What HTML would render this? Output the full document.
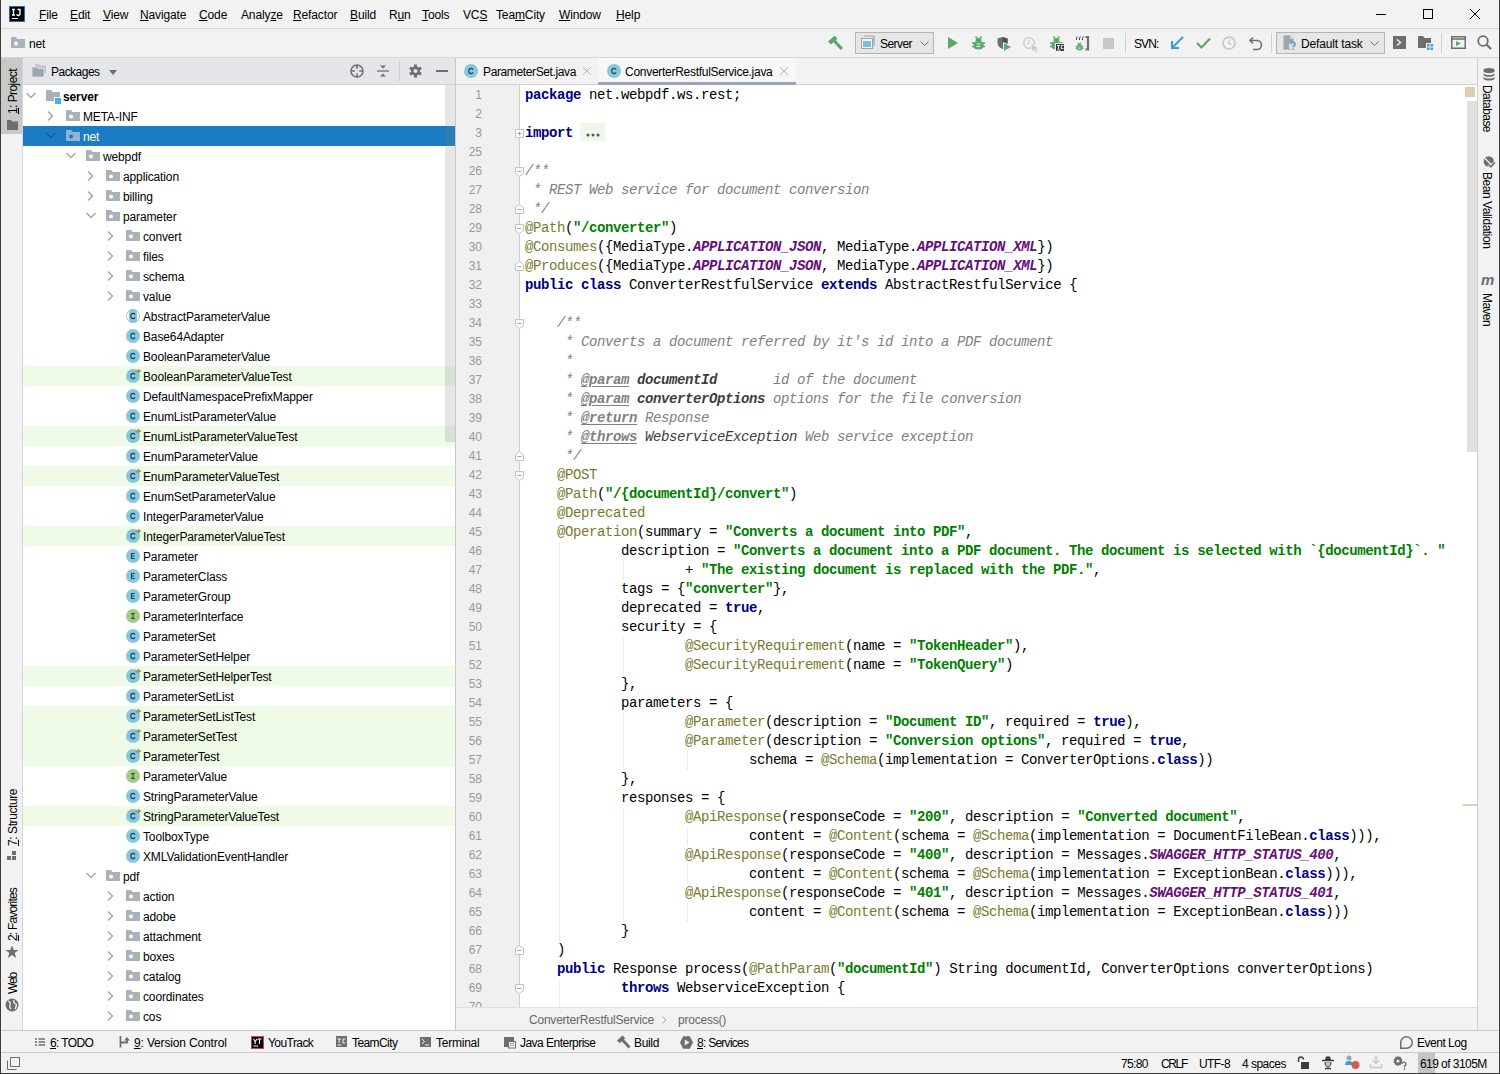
<!DOCTYPE html><html><head><meta charset="utf-8"><style>
*{box-sizing:border-box}
html,body{margin:0;padding:0}
body{width:1500px;height:1074px;overflow:hidden;position:relative;background:#f2f2f2;font-family:"Liberation Sans",sans-serif;font-size:12px;color:#000}
.a{position:absolute}
.ui{position:absolute;font-family:"Liberation Sans",sans-serif;font-size:12px;letter-spacing:-0.13px;white-space:nowrap;line-height:14px}
.hl{position:absolute;height:1px}
.vl{position:absolute;width:1px}
u{text-decoration:underline;text-underline-offset:1px}
svg{position:absolute;overflow:visible}
.row{position:absolute;left:23px;width:432px;height:20px}
.tt{position:absolute;font-family:"Liberation Sans",sans-serif;font-size:12px;letter-spacing:-0.13px;white-space:pre;line-height:20px;color:#000}
.ln{position:absolute;left:456px;width:26px;text-align:right;font-family:"Liberation Sans",sans-serif;font-size:12px;line-height:19px;color:#999}
.cl{position:absolute;left:525px;font-family:"Liberation Mono",monospace;font-size:14px;letter-spacing:-0.4px;line-height:19px;white-space:pre;color:#000}
.k{color:#000080;font-weight:bold}
.s{color:#008000;font-weight:bold}
.an{color:#7a7a2e}
.c{color:#808080;font-style:italic}
.dt{color:#808080;font-style:italic;font-weight:bold;text-decoration:underline;text-underline-offset:2px}
.dp{color:#3d3d3d;font-style:italic;font-weight:bold}
.dr{color:#3d3d3d;font-style:italic}
.st{color:#660e7a;font-weight:bold;font-style:italic}
</style></head><body>
<div class="vl" style="left:0;top:0;height:1074px;background:#3c3c3c"></div>
<div class="vl" style="left:1499px;top:0;height:1074px;background:#3c3c3c"></div>
<div class="hl" style="left:0;top:1073px;width:1500px;background:#3c3c3c"></div>
<div class="hl" style="left:1px;top:28px;width:1498px;background:#d6d6d6"></div>
<div class="a" style="left:9px;top:6px;width:16px;height:16px;background:#000;border:1px solid #2a6aae"></div>
<svg style="left:9px;top:6px" width="16" height="16"><path d="M3 3.5H6M4.5 3.5V9M3 9H6" stroke="#fff" stroke-width="1.3" fill="none"/><path d="M8.5 3.5H11V7.5A1.6 1.6 0 0 1 7.8 8.2" stroke="#fff" stroke-width="1.4" fill="none"/></svg>
<div class="a" style="left:12px;top:18px;width:6px;height:1px;background:#fff"></div>
<div class="ui" style="left:39px;top:8px"><u>F</u>ile</div>
<div class="ui" style="left:70px;top:8px"><u>E</u>dit</div>
<div class="ui" style="left:103px;top:8px"><u>V</u>iew</div>
<div class="ui" style="left:140px;top:8px"><u>N</u>avigate</div>
<div class="ui" style="left:199px;top:8px"><u>C</u>ode</div>
<div class="ui" style="left:241px;top:8px">Analy<u>z</u>e</div>
<div class="ui" style="left:293px;top:8px"><u>R</u>efactor</div>
<div class="ui" style="left:350px;top:8px"><u>B</u>uild</div>
<div class="ui" style="left:389px;top:8px">R<u>u</u>n</div>
<div class="ui" style="left:422px;top:8px"><u>T</u>ools</div>
<div class="ui" style="left:463px;top:8px">VC<u>S</u></div>
<div class="ui" style="left:496px;top:8px">Tea<u>m</u>City</div>
<div class="ui" style="left:559px;top:8px"><u>W</u>indow</div>
<div class="ui" style="left:616px;top:8px"><u>H</u>elp</div>
<div class="a" style="left:1376px;top:14px;width:10px;height:1px;background:#000"></div>
<div class="a" style="left:1423px;top:9px;width:10px;height:10px;border:1px solid #000"></div>
<svg style="left:1470px;top:9px" width="10" height="10"><path d="M0 0L10 10M10 0L0 10" stroke="#000" stroke-width="1"/></svg>
<div class="hl" style="left:1px;top:57px;width:1498px;background:#d6d6d6"></div>
<div class="vl" style="left:22px;top:58px;height:973px;background:#d6d6d6"></div>
<div class="a" style="left:1px;top:58px;width:21px;height:76px;background:#c9c9c9"></div>
<div class="a" style="left:23px;top:58px;width:432px;height:26px;background:#e4e6ea"></div>
<div class="hl" style="left:23px;top:84px;width:432px;background:#d0d0d0"></div>
<div class="a" style="left:23px;top:85px;width:432px;height:945px;background:#fff"></div>
<div class="vl" style="left:455px;top:58px;height:973px;background:#c9c9c9"></div>
<svg style="left:26px;top:92px" width="10" height="7"><path d="M0.5 1L5 5.5L9.5 1" fill="none" stroke="#a8a8a8" stroke-width="1.5"/></svg>
<svg style="left:46px;top:90px" width="16" height="15"><path d="M0 0H5L6.5 2H14V11H0Z" fill="#aab2b9"/><rect x="8.5" y="7.5" width="7" height="7" fill="#40b6e0" stroke="#fff" stroke-width="1"/></svg>
<div class="tt" style="left:63px;top:87px;font-weight:bold">server</div>
<svg style="left:47px;top:111px" width="7" height="10"><path d="M1 0.5L5.5 5L1 9.5" fill="none" stroke="#a8a8a8" stroke-width="1.5"/></svg>
<svg style="left:66px;top:110px" width="14" height="11"><path d="M0 0H5L6.5 2H14V11H0Z" fill="#aab2b9"/><circle cx="5" cy="6.5" r="2" fill="#fff"/></svg>
<div class="tt" style="left:83px;top:107px">META-INF</div>
<div class="a" style="left:23px;top:126px;width:432px;height:20px;background:#1b7cc4"></div>
<svg style="left:46px;top:132px" width="10" height="7"><path d="M0.5 1L5 5.5L9.5 1" fill="none" stroke="#1b5c9a" stroke-width="1.5"/></svg>
<svg style="left:66px;top:130px" width="14" height="11"><path d="M0 0H5L6.5 2H14V11H0Z" fill="#8fb4d6"/><circle cx="5" cy="6.5" r="2" fill="#1b7cc4"/></svg>
<div class="tt" style="left:83px;top:127px;color:#fff">net</div>
<svg style="left:66px;top:152px" width="10" height="7"><path d="M0.5 1L5 5.5L9.5 1" fill="none" stroke="#a8a8a8" stroke-width="1.5"/></svg>
<svg style="left:86px;top:150px" width="14" height="11"><path d="M0 0H5L6.5 2H14V11H0Z" fill="#aab2b9"/><circle cx="5" cy="6.5" r="2" fill="#fff"/></svg>
<div class="tt" style="left:103px;top:147px">webpdf</div>
<svg style="left:87px;top:171px" width="7" height="10"><path d="M1 0.5L5.5 5L1 9.5" fill="none" stroke="#a8a8a8" stroke-width="1.5"/></svg>
<svg style="left:106px;top:170px" width="14" height="11"><path d="M0 0H5L6.5 2H14V11H0Z" fill="#aab2b9"/><circle cx="5" cy="6.5" r="2" fill="#fff"/></svg>
<div class="tt" style="left:123px;top:167px">application</div>
<svg style="left:87px;top:191px" width="7" height="10"><path d="M1 0.5L5.5 5L1 9.5" fill="none" stroke="#a8a8a8" stroke-width="1.5"/></svg>
<svg style="left:106px;top:190px" width="14" height="11"><path d="M0 0H5L6.5 2H14V11H0Z" fill="#aab2b9"/><circle cx="5" cy="6.5" r="2" fill="#fff"/></svg>
<div class="tt" style="left:123px;top:187px">billing</div>
<svg style="left:86px;top:212px" width="10" height="7"><path d="M0.5 1L5 5.5L9.5 1" fill="none" stroke="#a8a8a8" stroke-width="1.5"/></svg>
<svg style="left:106px;top:210px" width="14" height="11"><path d="M0 0H5L6.5 2H14V11H0Z" fill="#aab2b9"/><circle cx="5" cy="6.5" r="2" fill="#fff"/></svg>
<div class="tt" style="left:123px;top:207px">parameter</div>
<svg style="left:107px;top:231px" width="7" height="10"><path d="M1 0.5L5.5 5L1 9.5" fill="none" stroke="#a8a8a8" stroke-width="1.5"/></svg>
<svg style="left:126px;top:230px" width="14" height="11"><path d="M0 0H5L6.5 2H14V11H0Z" fill="#aab2b9"/><circle cx="5" cy="6.5" r="2" fill="#fff"/></svg>
<div class="tt" style="left:143px;top:227px">convert</div>
<svg style="left:107px;top:251px" width="7" height="10"><path d="M1 0.5L5.5 5L1 9.5" fill="none" stroke="#a8a8a8" stroke-width="1.5"/></svg>
<svg style="left:126px;top:250px" width="14" height="11"><path d="M0 0H5L6.5 2H14V11H0Z" fill="#aab2b9"/><circle cx="5" cy="6.5" r="2" fill="#fff"/></svg>
<div class="tt" style="left:143px;top:247px">files</div>
<svg style="left:107px;top:271px" width="7" height="10"><path d="M1 0.5L5.5 5L1 9.5" fill="none" stroke="#a8a8a8" stroke-width="1.5"/></svg>
<svg style="left:126px;top:270px" width="14" height="11"><path d="M0 0H5L6.5 2H14V11H0Z" fill="#aab2b9"/><circle cx="5" cy="6.5" r="2" fill="#fff"/></svg>
<div class="tt" style="left:143px;top:267px">schema</div>
<svg style="left:107px;top:291px" width="7" height="10"><path d="M1 0.5L5.5 5L1 9.5" fill="none" stroke="#a8a8a8" stroke-width="1.5"/></svg>
<svg style="left:126px;top:290px" width="14" height="11"><path d="M0 0H5L6.5 2H14V11H0Z" fill="#aab2b9"/><circle cx="5" cy="6.5" r="2" fill="#fff"/></svg>
<div class="tt" style="left:143px;top:287px">value</div>
<svg style="left:126px;top:309px" width="14" height="14"><circle cx="7" cy="7" r="7" fill="#c6c6c6"/><circle cx="7" cy="7" r="6" fill="#fff"/><path d="M3 1.6A6.3 6.3 0 0 1 11 1.6V12.4A6.3 6.3 0 0 1 3 12.4Z" fill="#84c8e0"/><path d="M9.1 5.6A2.4 2.6 0 1 0 9.1 8.4" fill="none" stroke="#23424e" stroke-width="1.15"/></svg>
<div class="tt" style="left:143px;top:307px">AbstractParameterValue</div>
<svg style="left:126px;top:329px" width="14" height="14"><circle cx="7" cy="7" r="7" fill="#84c8e0"/><path d="M9.1 5.6A2.4 2.6 0 1 0 9.1 8.4" fill="none" stroke="#23424e" stroke-width="1.15"/></svg>
<div class="tt" style="left:143px;top:327px">Base64Adapter</div>
<svg style="left:126px;top:349px" width="14" height="14"><circle cx="7" cy="7" r="7" fill="#84c8e0"/><path d="M9.1 5.6A2.4 2.6 0 1 0 9.1 8.4" fill="none" stroke="#23424e" stroke-width="1.15"/></svg>
<div class="tt" style="left:143px;top:347px">BooleanParameterValue</div>
<div class="a" style="left:23px;top:366px;width:432px;height:20px;background:#effae7"></div>
<svg style="left:126px;top:369px" width="14" height="14"><circle cx="7" cy="7" r="7" fill="#84c8e0"/><path d="M9.1 5.6A2.4 2.6 0 1 0 9.1 8.4" fill="none" stroke="#23424e" stroke-width="1.15"/><path d="M8.8 2.2L11.6 0.2V4.2Z" fill="#e0785a"/><path d="M12 -0.2L15.2 2.2L12 4.6Z" fill="#5aaa5a"/></svg>
<div class="tt" style="left:143px;top:367px">BooleanParameterValueTest</div>
<svg style="left:126px;top:389px" width="14" height="14"><circle cx="7" cy="7" r="7" fill="#84c8e0"/><path d="M9.1 5.6A2.4 2.6 0 1 0 9.1 8.4" fill="none" stroke="#23424e" stroke-width="1.15"/></svg>
<div class="tt" style="left:143px;top:387px">DefaultNamespacePrefixMapper</div>
<svg style="left:126px;top:409px" width="14" height="14"><circle cx="7" cy="7" r="7" fill="#84c8e0"/><path d="M9.1 5.6A2.4 2.6 0 1 0 9.1 8.4" fill="none" stroke="#23424e" stroke-width="1.15"/></svg>
<div class="tt" style="left:143px;top:407px">EnumListParameterValue</div>
<div class="a" style="left:23px;top:426px;width:432px;height:20px;background:#effae7"></div>
<svg style="left:126px;top:429px" width="14" height="14"><circle cx="7" cy="7" r="7" fill="#84c8e0"/><path d="M9.1 5.6A2.4 2.6 0 1 0 9.1 8.4" fill="none" stroke="#23424e" stroke-width="1.15"/><path d="M8.8 2.2L11.6 0.2V4.2Z" fill="#e0785a"/><path d="M12 -0.2L15.2 2.2L12 4.6Z" fill="#5aaa5a"/></svg>
<div class="tt" style="left:143px;top:427px">EnumListParameterValueTest</div>
<svg style="left:126px;top:449px" width="14" height="14"><circle cx="7" cy="7" r="7" fill="#84c8e0"/><path d="M9.1 5.6A2.4 2.6 0 1 0 9.1 8.4" fill="none" stroke="#23424e" stroke-width="1.15"/></svg>
<div class="tt" style="left:143px;top:447px">EnumParameterValue</div>
<div class="a" style="left:23px;top:466px;width:432px;height:20px;background:#effae7"></div>
<svg style="left:126px;top:469px" width="14" height="14"><circle cx="7" cy="7" r="7" fill="#84c8e0"/><path d="M9.1 5.6A2.4 2.6 0 1 0 9.1 8.4" fill="none" stroke="#23424e" stroke-width="1.15"/><path d="M8.8 2.2L11.6 0.2V4.2Z" fill="#e0785a"/><path d="M12 -0.2L15.2 2.2L12 4.6Z" fill="#5aaa5a"/></svg>
<div class="tt" style="left:143px;top:467px">EnumParameterValueTest</div>
<svg style="left:126px;top:489px" width="14" height="14"><circle cx="7" cy="7" r="7" fill="#84c8e0"/><path d="M9.1 5.6A2.4 2.6 0 1 0 9.1 8.4" fill="none" stroke="#23424e" stroke-width="1.15"/></svg>
<div class="tt" style="left:143px;top:487px">EnumSetParameterValue</div>
<svg style="left:126px;top:509px" width="14" height="14"><circle cx="7" cy="7" r="7" fill="#84c8e0"/><path d="M9.1 5.6A2.4 2.6 0 1 0 9.1 8.4" fill="none" stroke="#23424e" stroke-width="1.15"/></svg>
<div class="tt" style="left:143px;top:507px">IntegerParameterValue</div>
<div class="a" style="left:23px;top:526px;width:432px;height:20px;background:#effae7"></div>
<svg style="left:126px;top:529px" width="14" height="14"><circle cx="7" cy="7" r="7" fill="#84c8e0"/><path d="M9.1 5.6A2.4 2.6 0 1 0 9.1 8.4" fill="none" stroke="#23424e" stroke-width="1.15"/><path d="M8.8 2.2L11.6 0.2V4.2Z" fill="#e0785a"/><path d="M12 -0.2L15.2 2.2L12 4.6Z" fill="#5aaa5a"/></svg>
<div class="tt" style="left:143px;top:527px">IntegerParameterValueTest</div>
<svg style="left:126px;top:549px" width="14" height="14"><circle cx="7" cy="7" r="7" fill="#84c8e0"/><path d="M8.8 4.5H5.5V9.5H8.8M5.5 7H8.3" fill="none" stroke="#23424e" stroke-width="1.1"/></svg>
<div class="tt" style="left:143px;top:547px">Parameter</div>
<svg style="left:126px;top:569px" width="14" height="14"><circle cx="7" cy="7" r="7" fill="#84c8e0"/><path d="M8.8 4.5H5.5V9.5H8.8M5.5 7H8.3" fill="none" stroke="#23424e" stroke-width="1.1"/></svg>
<div class="tt" style="left:143px;top:567px">ParameterClass</div>
<svg style="left:126px;top:589px" width="14" height="14"><circle cx="7" cy="7" r="7" fill="#84c8e0"/><path d="M8.8 4.5H5.5V9.5H8.8M5.5 7H8.3" fill="none" stroke="#23424e" stroke-width="1.1"/></svg>
<div class="tt" style="left:143px;top:587px">ParameterGroup</div>
<svg style="left:126px;top:609px" width="14" height="14"><circle cx="7" cy="7" r="7" fill="#9dc98a"/><path d="M5.2 4.5H8.8M7 4.5V9.5M5.2 9.5H8.8" fill="none" stroke="#2a4424" stroke-width="1.1"/></svg>
<div class="tt" style="left:143px;top:607px">ParameterInterface</div>
<svg style="left:126px;top:629px" width="14" height="14"><circle cx="7" cy="7" r="7" fill="#84c8e0"/><path d="M9.1 5.6A2.4 2.6 0 1 0 9.1 8.4" fill="none" stroke="#23424e" stroke-width="1.15"/></svg>
<div class="tt" style="left:143px;top:627px">ParameterSet</div>
<svg style="left:126px;top:649px" width="14" height="14"><circle cx="7" cy="7" r="7" fill="#84c8e0"/><path d="M9.1 5.6A2.4 2.6 0 1 0 9.1 8.4" fill="none" stroke="#23424e" stroke-width="1.15"/></svg>
<div class="tt" style="left:143px;top:647px">ParameterSetHelper</div>
<div class="a" style="left:23px;top:666px;width:432px;height:20px;background:#effae7"></div>
<svg style="left:126px;top:669px" width="14" height="14"><circle cx="7" cy="7" r="7" fill="#84c8e0"/><path d="M9.1 5.6A2.4 2.6 0 1 0 9.1 8.4" fill="none" stroke="#23424e" stroke-width="1.15"/><path d="M8.8 2.2L11.6 0.2V4.2Z" fill="#e0785a"/><path d="M12 -0.2L15.2 2.2L12 4.6Z" fill="#5aaa5a"/></svg>
<div class="tt" style="left:143px;top:667px">ParameterSetHelperTest</div>
<svg style="left:126px;top:689px" width="14" height="14"><circle cx="7" cy="7" r="7" fill="#84c8e0"/><path d="M9.1 5.6A2.4 2.6 0 1 0 9.1 8.4" fill="none" stroke="#23424e" stroke-width="1.15"/></svg>
<div class="tt" style="left:143px;top:687px">ParameterSetList</div>
<div class="a" style="left:23px;top:706px;width:432px;height:20px;background:#effae7"></div>
<svg style="left:126px;top:709px" width="14" height="14"><circle cx="7" cy="7" r="7" fill="#84c8e0"/><path d="M9.1 5.6A2.4 2.6 0 1 0 9.1 8.4" fill="none" stroke="#23424e" stroke-width="1.15"/><path d="M8.8 2.2L11.6 0.2V4.2Z" fill="#e0785a"/><path d="M12 -0.2L15.2 2.2L12 4.6Z" fill="#5aaa5a"/></svg>
<div class="tt" style="left:143px;top:707px">ParameterSetListTest</div>
<div class="a" style="left:23px;top:726px;width:432px;height:20px;background:#effae7"></div>
<svg style="left:126px;top:729px" width="14" height="14"><circle cx="7" cy="7" r="7" fill="#84c8e0"/><path d="M9.1 5.6A2.4 2.6 0 1 0 9.1 8.4" fill="none" stroke="#23424e" stroke-width="1.15"/><path d="M8.8 2.2L11.6 0.2V4.2Z" fill="#e0785a"/><path d="M12 -0.2L15.2 2.2L12 4.6Z" fill="#5aaa5a"/></svg>
<div class="tt" style="left:143px;top:727px">ParameterSetTest</div>
<div class="a" style="left:23px;top:746px;width:432px;height:20px;background:#effae7"></div>
<svg style="left:126px;top:749px" width="14" height="14"><circle cx="7" cy="7" r="7" fill="#84c8e0"/><path d="M9.1 5.6A2.4 2.6 0 1 0 9.1 8.4" fill="none" stroke="#23424e" stroke-width="1.15"/><path d="M8.8 2.2L11.6 0.2V4.2Z" fill="#e0785a"/><path d="M12 -0.2L15.2 2.2L12 4.6Z" fill="#5aaa5a"/></svg>
<div class="tt" style="left:143px;top:747px">ParameterTest</div>
<svg style="left:126px;top:769px" width="14" height="14"><circle cx="7" cy="7" r="7" fill="#9dc98a"/><path d="M5.2 4.5H8.8M7 4.5V9.5M5.2 9.5H8.8" fill="none" stroke="#2a4424" stroke-width="1.1"/></svg>
<div class="tt" style="left:143px;top:767px">ParameterValue</div>
<svg style="left:126px;top:789px" width="14" height="14"><circle cx="7" cy="7" r="7" fill="#84c8e0"/><path d="M9.1 5.6A2.4 2.6 0 1 0 9.1 8.4" fill="none" stroke="#23424e" stroke-width="1.15"/></svg>
<div class="tt" style="left:143px;top:787px">StringParameterValue</div>
<div class="a" style="left:23px;top:806px;width:432px;height:20px;background:#effae7"></div>
<svg style="left:126px;top:809px" width="14" height="14"><circle cx="7" cy="7" r="7" fill="#84c8e0"/><path d="M9.1 5.6A2.4 2.6 0 1 0 9.1 8.4" fill="none" stroke="#23424e" stroke-width="1.15"/><path d="M8.8 2.2L11.6 0.2V4.2Z" fill="#e0785a"/><path d="M12 -0.2L15.2 2.2L12 4.6Z" fill="#5aaa5a"/></svg>
<div class="tt" style="left:143px;top:807px">StringParameterValueTest</div>
<svg style="left:126px;top:829px" width="14" height="14"><circle cx="7" cy="7" r="7" fill="#84c8e0"/><path d="M9.1 5.6A2.4 2.6 0 1 0 9.1 8.4" fill="none" stroke="#23424e" stroke-width="1.15"/></svg>
<div class="tt" style="left:143px;top:827px">ToolboxType</div>
<svg style="left:126px;top:849px" width="14" height="14"><circle cx="7" cy="7" r="7" fill="#84c8e0"/><path d="M9.1 5.6A2.4 2.6 0 1 0 9.1 8.4" fill="none" stroke="#23424e" stroke-width="1.15"/></svg>
<div class="tt" style="left:143px;top:847px">XMLValidationEventHandler</div>
<svg style="left:86px;top:872px" width="10" height="7"><path d="M0.5 1L5 5.5L9.5 1" fill="none" stroke="#a8a8a8" stroke-width="1.5"/></svg>
<svg style="left:106px;top:870px" width="14" height="11"><path d="M0 0H5L6.5 2H14V11H0Z" fill="#aab2b9"/><circle cx="5" cy="6.5" r="2" fill="#fff"/></svg>
<div class="tt" style="left:123px;top:867px">pdf</div>
<svg style="left:107px;top:891px" width="7" height="10"><path d="M1 0.5L5.5 5L1 9.5" fill="none" stroke="#a8a8a8" stroke-width="1.5"/></svg>
<svg style="left:126px;top:890px" width="14" height="11"><path d="M0 0H5L6.5 2H14V11H0Z" fill="#aab2b9"/><circle cx="5" cy="6.5" r="2" fill="#fff"/></svg>
<div class="tt" style="left:143px;top:887px">action</div>
<svg style="left:107px;top:911px" width="7" height="10"><path d="M1 0.5L5.5 5L1 9.5" fill="none" stroke="#a8a8a8" stroke-width="1.5"/></svg>
<svg style="left:126px;top:910px" width="14" height="11"><path d="M0 0H5L6.5 2H14V11H0Z" fill="#aab2b9"/><circle cx="5" cy="6.5" r="2" fill="#fff"/></svg>
<div class="tt" style="left:143px;top:907px">adobe</div>
<svg style="left:107px;top:931px" width="7" height="10"><path d="M1 0.5L5.5 5L1 9.5" fill="none" stroke="#a8a8a8" stroke-width="1.5"/></svg>
<svg style="left:126px;top:930px" width="14" height="11"><path d="M0 0H5L6.5 2H14V11H0Z" fill="#aab2b9"/><circle cx="5" cy="6.5" r="2" fill="#fff"/></svg>
<div class="tt" style="left:143px;top:927px">attachment</div>
<svg style="left:107px;top:951px" width="7" height="10"><path d="M1 0.5L5.5 5L1 9.5" fill="none" stroke="#a8a8a8" stroke-width="1.5"/></svg>
<svg style="left:126px;top:950px" width="14" height="11"><path d="M0 0H5L6.5 2H14V11H0Z" fill="#aab2b9"/><circle cx="5" cy="6.5" r="2" fill="#fff"/></svg>
<div class="tt" style="left:143px;top:947px">boxes</div>
<svg style="left:107px;top:971px" width="7" height="10"><path d="M1 0.5L5.5 5L1 9.5" fill="none" stroke="#a8a8a8" stroke-width="1.5"/></svg>
<svg style="left:126px;top:970px" width="14" height="11"><path d="M0 0H5L6.5 2H14V11H0Z" fill="#aab2b9"/><circle cx="5" cy="6.5" r="2" fill="#fff"/></svg>
<div class="tt" style="left:143px;top:967px">catalog</div>
<svg style="left:107px;top:991px" width="7" height="10"><path d="M1 0.5L5.5 5L1 9.5" fill="none" stroke="#a8a8a8" stroke-width="1.5"/></svg>
<svg style="left:126px;top:990px" width="14" height="11"><path d="M0 0H5L6.5 2H14V11H0Z" fill="#aab2b9"/><circle cx="5" cy="6.5" r="2" fill="#fff"/></svg>
<div class="tt" style="left:143px;top:987px">coordinates</div>
<svg style="left:107px;top:1011px" width="7" height="10"><path d="M1 0.5L5.5 5L1 9.5" fill="none" stroke="#a8a8a8" stroke-width="1.5"/></svg>
<svg style="left:126px;top:1010px" width="14" height="11"><path d="M0 0H5L6.5 2H14V11H0Z" fill="#aab2b9"/><circle cx="5" cy="6.5" r="2" fill="#fff"/></svg>
<div class="tt" style="left:143px;top:1007px">cos</div>
<div class="a" style="left:445px;top:85px;width:10px;height:357px;background:rgba(128,128,128,0.2)"></div>
<div class="hl" style="left:456px;top:84px;width:1021px;background:#d0d0d0"></div>
<div class="a" style="left:456px;top:85px;width:64px;height:922px;background:#f0f0f0"></div>
<div class="vl" style="left:519px;top:85px;height:922px;background:#d0d0d0"></div>
<div class="a" style="left:520px;top:85px;width:957px;height:922px;background:#fff"></div>
<div class="vl" style="left:559px;top:542px;height:399px;background:#ececec"></div>
<div class="vl" style="left:559px;top:979px;height:28px;background:#ececec"></div>
<div class="vl" style="left:623px;top:561px;height:19px;background:#ececec"></div>
<div class="vl" style="left:623px;top:637px;height:38px;background:#ececec"></div>
<div class="vl" style="left:623px;top:713px;height:57px;background:#ececec"></div>
<div class="vl" style="left:623px;top:808px;height:114px;background:#ececec"></div>
<div class="vl" style="left:687px;top:751px;height:19px;background:#ececec"></div>
<div class="vl" style="left:687px;top:827px;height:19px;background:#ececec"></div>
<div class="vl" style="left:687px;top:865px;height:19px;background:#ececec"></div>
<div class="vl" style="left:687px;top:903px;height:19px;background:#ececec"></div>
<div class="a" style="left:456px;top:86px;width:1021px;height:921px;overflow:hidden">
<div class="ln" style="left:0;top:0px">1</div>
<div class="cl" style="left:69px;top:0px"><span class="k">package</span> net.webpdf.ws.rest;</div>
<div class="ln" style="left:0;top:19px">2</div>
<div class="cl" style="left:69px;top:19px"></div>
<div class="ln" style="left:0;top:38px">3</div>
<div class="cl" style="left:69px;top:38px"><span class="k">import</span> <span style="display:inline-block;width:25px;height:18px;vertical-align:top;background:#eef7ea;position:relative;left:-1px;top:-1px"><svg style="left:6px;top:10px" width="14" height="4"><circle cx="2" cy="2" r="1.5" fill="#555"/><circle cx="7" cy="2" r="1.5" fill="#555"/><circle cx="12" cy="2" r="1.5" fill="#555"/></svg></span></div>
<div class="ln" style="left:0;top:57px">25</div>
<div class="cl" style="left:69px;top:57px"></div>
<div class="ln" style="left:0;top:76px">26</div>
<div class="cl" style="left:69px;top:76px"><span class="c">/**</span></div>
<div class="ln" style="left:0;top:95px">27</div>
<div class="cl" style="left:69px;top:95px"><span class="c"> * REST Web service for document conversion</span></div>
<div class="ln" style="left:0;top:114px">28</div>
<div class="cl" style="left:69px;top:114px"><span class="c"> */</span></div>
<div class="ln" style="left:0;top:133px">29</div>
<div class="cl" style="left:69px;top:133px"><span class="an">@Path</span>(<span class="s">&quot;/converter&quot;</span>)</div>
<div class="ln" style="left:0;top:152px">30</div>
<div class="cl" style="left:69px;top:152px"><span class="an">@Consumes</span>({MediaType.<span class="st">APPLICATION_JSON</span>, MediaType.<span class="st">APPLICATION_XML</span>})</div>
<div class="ln" style="left:0;top:171px">31</div>
<div class="cl" style="left:69px;top:171px"><span class="an">@Produces</span>({MediaType.<span class="st">APPLICATION_JSON</span>, MediaType.<span class="st">APPLICATION_XML</span>})</div>
<div class="ln" style="left:0;top:190px">32</div>
<div class="cl" style="left:69px;top:190px"><span class="k">public</span> <span class="k">class</span> ConverterRestfulService <span class="k">extends</span> AbstractRestfulService {</div>
<div class="ln" style="left:0;top:209px">33</div>
<div class="cl" style="left:69px;top:209px"></div>
<div class="ln" style="left:0;top:228px">34</div>
<div class="cl" style="left:69px;top:228px">    <span class="c">/**</span></div>
<div class="ln" style="left:0;top:247px">35</div>
<div class="cl" style="left:69px;top:247px">    <span class="c"> * Converts a document referred by it&#x27;s id into a PDF document</span></div>
<div class="ln" style="left:0;top:266px">36</div>
<div class="cl" style="left:69px;top:266px">    <span class="c"> *</span></div>
<div class="ln" style="left:0;top:285px">37</div>
<div class="cl" style="left:69px;top:285px">    <span class="c"> * </span><span class="dt">@param</span><span class="c"> </span><span class="dp">documentId</span><span class="c">       id of the document</span></div>
<div class="ln" style="left:0;top:304px">38</div>
<div class="cl" style="left:69px;top:304px">    <span class="c"> * </span><span class="dt">@param</span><span class="c"> </span><span class="dp">converterOptions</span><span class="c"> options for the file conversion</span></div>
<div class="ln" style="left:0;top:323px">39</div>
<div class="cl" style="left:69px;top:323px">    <span class="c"> * </span><span class="dt">@return</span><span class="c"> Response</span></div>
<div class="ln" style="left:0;top:342px">40</div>
<div class="cl" style="left:69px;top:342px">    <span class="c"> * </span><span class="dt">@throws</span><span class="c"> </span><span class="dr">WebserviceException</span><span class="c"> Web service exception</span></div>
<div class="ln" style="left:0;top:361px">41</div>
<div class="cl" style="left:69px;top:361px">    <span class="c"> */</span></div>
<div class="ln" style="left:0;top:380px">42</div>
<div class="cl" style="left:69px;top:380px">    <span class="an">@POST</span></div>
<div class="ln" style="left:0;top:399px">43</div>
<div class="cl" style="left:69px;top:399px">    <span class="an">@Path</span>(<span class="s">&quot;/{documentId}/convert&quot;</span>)</div>
<div class="ln" style="left:0;top:418px">44</div>
<div class="cl" style="left:69px;top:418px">    <span class="an">@Deprecated</span></div>
<div class="ln" style="left:0;top:437px">45</div>
<div class="cl" style="left:69px;top:437px">    <span class="an">@Operation</span>(summary = <span class="s">&quot;Converts a document into PDF&quot;</span>,</div>
<div class="ln" style="left:0;top:456px">46</div>
<div class="cl" style="left:69px;top:456px">            description = <span class="s">&quot;Converts a document into a PDF document. The document is selected with `{documentId}`. &quot;</span></div>
<div class="ln" style="left:0;top:475px">47</div>
<div class="cl" style="left:69px;top:475px">                    + <span class="s">&quot;The existing document is replaced with the PDF.&quot;</span>,</div>
<div class="ln" style="left:0;top:494px">48</div>
<div class="cl" style="left:69px;top:494px">            tags = {<span class="s">&quot;converter&quot;</span>},</div>
<div class="ln" style="left:0;top:513px">49</div>
<div class="cl" style="left:69px;top:513px">            deprecated = <span class="k">true</span>,</div>
<div class="ln" style="left:0;top:532px">50</div>
<div class="cl" style="left:69px;top:532px">            security = {</div>
<div class="ln" style="left:0;top:551px">51</div>
<div class="cl" style="left:69px;top:551px">                    <span class="an">@SecurityRequirement</span>(name = <span class="s">&quot;TokenHeader&quot;</span>),</div>
<div class="ln" style="left:0;top:570px">52</div>
<div class="cl" style="left:69px;top:570px">                    <span class="an">@SecurityRequirement</span>(name = <span class="s">&quot;TokenQuery&quot;</span>)</div>
<div class="ln" style="left:0;top:589px">53</div>
<div class="cl" style="left:69px;top:589px">            },</div>
<div class="ln" style="left:0;top:608px">54</div>
<div class="cl" style="left:69px;top:608px">            parameters = {</div>
<div class="ln" style="left:0;top:627px">55</div>
<div class="cl" style="left:69px;top:627px">                    <span class="an">@Parameter</span>(description = <span class="s">&quot;Document ID&quot;</span>, required = <span class="k">true</span>),</div>
<div class="ln" style="left:0;top:646px">56</div>
<div class="cl" style="left:69px;top:646px">                    <span class="an">@Parameter</span>(description = <span class="s">&quot;Conversion options&quot;</span>, required = <span class="k">true</span>,</div>
<div class="ln" style="left:0;top:665px">57</div>
<div class="cl" style="left:69px;top:665px">                            schema = <span class="an">@Schema</span>(implementation = ConverterOptions.<span class="k">class</span>))</div>
<div class="ln" style="left:0;top:684px">58</div>
<div class="cl" style="left:69px;top:684px">            },</div>
<div class="ln" style="left:0;top:703px">59</div>
<div class="cl" style="left:69px;top:703px">            responses = {</div>
<div class="ln" style="left:0;top:722px">60</div>
<div class="cl" style="left:69px;top:722px">                    <span class="an">@ApiResponse</span>(responseCode = <span class="s">&quot;200&quot;</span>, description = <span class="s">&quot;Converted document&quot;</span>,</div>
<div class="ln" style="left:0;top:741px">61</div>
<div class="cl" style="left:69px;top:741px">                            content = <span class="an">@Content</span>(schema = <span class="an">@Schema</span>(implementation = DocumentFileBean.<span class="k">class</span>))),</div>
<div class="ln" style="left:0;top:760px">62</div>
<div class="cl" style="left:69px;top:760px">                    <span class="an">@ApiResponse</span>(responseCode = <span class="s">&quot;400&quot;</span>, description = Messages.<span class="st">SWAGGER_HTTP_STATUS_400</span>,</div>
<div class="ln" style="left:0;top:779px">63</div>
<div class="cl" style="left:69px;top:779px">                            content = <span class="an">@Content</span>(schema = <span class="an">@Schema</span>(implementation = ExceptionBean.<span class="k">class</span>))),</div>
<div class="ln" style="left:0;top:798px">64</div>
<div class="cl" style="left:69px;top:798px">                    <span class="an">@ApiResponse</span>(responseCode = <span class="s">&quot;401&quot;</span>, description = Messages.<span class="st">SWAGGER_HTTP_STATUS_401</span>,</div>
<div class="ln" style="left:0;top:817px">65</div>
<div class="cl" style="left:69px;top:817px">                            content = <span class="an">@Content</span>(schema = <span class="an">@Schema</span>(implementation = ExceptionBean.<span class="k">class</span>)))</div>
<div class="ln" style="left:0;top:836px">66</div>
<div class="cl" style="left:69px;top:836px">            }</div>
<div class="ln" style="left:0;top:855px">67</div>
<div class="cl" style="left:69px;top:855px">    )</div>
<div class="ln" style="left:0;top:874px">68</div>
<div class="cl" style="left:69px;top:874px">    <span class="k">public</span> Response process(<span class="an">@PathParam</span>(<span class="s">&quot;documentId&quot;</span>) String documentId, ConverterOptions converterOptions)</div>
<div class="ln" style="left:0;top:893px">69</div>
<div class="cl" style="left:69px;top:893px">            <span class="k">throws</span> WebserviceException {</div>
<div class="ln" style="left:0;top:912px">70</div>
<div class="cl" style="left:69px;top:912px"></div>
</div>
<svg style="left:515px;top:129px" width="9" height="9"><path d="M0.5 0.5H8.5V8.5H0.5Z" fill="#fff" stroke="#c2c2c2"/><path d="M2.5 4.5H6.5M4.5 2.5V6.5" stroke="#a0a0a0"/></svg>
<svg style="left:515px;top:167px" width="9" height="10"><path d="M0.5 0.5H8.5V6.5L4.5 9.5L0.5 6.5Z" fill="#fff" stroke="#c2c2c2"/><path d="M2.5 4.5H6.5" stroke="#a8a8a8"/></svg>
<svg style="left:515px;top:204px" width="9" height="10"><path d="M0.5 9.5H8.5V3.5L4.5 0.5L0.5 3.5Z" fill="#fff" stroke="#c2c2c2"/><path d="M2.5 5.5H6.5" stroke="#a8a8a8"/></svg>
<svg style="left:515px;top:224px" width="9" height="10"><path d="M0.5 0.5H8.5V6.5L4.5 9.5L0.5 6.5Z" fill="#fff" stroke="#c2c2c2"/><path d="M2.5 4.5H6.5" stroke="#a8a8a8"/></svg>
<svg style="left:515px;top:261px" width="9" height="10"><path d="M0.5 9.5H8.5V3.5L4.5 0.5L0.5 3.5Z" fill="#fff" stroke="#c2c2c2"/><path d="M2.5 5.5H6.5" stroke="#a8a8a8"/></svg>
<svg style="left:515px;top:319px" width="9" height="10"><path d="M0.5 0.5H8.5V6.5L4.5 9.5L0.5 6.5Z" fill="#fff" stroke="#c2c2c2"/><path d="M2.5 4.5H6.5" stroke="#a8a8a8"/></svg>
<svg style="left:515px;top:451px" width="9" height="10"><path d="M0.5 9.5H8.5V3.5L4.5 0.5L0.5 3.5Z" fill="#fff" stroke="#c2c2c2"/><path d="M2.5 5.5H6.5" stroke="#a8a8a8"/></svg>
<svg style="left:515px;top:471px" width="9" height="10"><path d="M0.5 0.5H8.5V6.5L4.5 9.5L0.5 6.5Z" fill="#fff" stroke="#c2c2c2"/><path d="M2.5 4.5H6.5" stroke="#a8a8a8"/></svg>
<svg style="left:515px;top:945px" width="9" height="10"><path d="M0.5 9.5H8.5V3.5L4.5 0.5L0.5 3.5Z" fill="#fff" stroke="#c2c2c2"/><path d="M2.5 5.5H6.5" stroke="#a8a8a8"/></svg>
<svg style="left:515px;top:984px" width="9" height="10"><path d="M0.5 0.5H8.5V6.5L4.5 9.5L0.5 6.5Z" fill="#fff" stroke="#c2c2c2"/><path d="M2.5 4.5H6.5" stroke="#a8a8a8"/></svg>
<div class="a" style="left:1465px;top:87px;width:10px;height:10px;background:#d9d0ae"></div>
<div class="a" style="left:1467px;top:101px;width:10px;height:351px;background:#e0e0e0"></div>
<div class="a" style="left:1463px;top:804px;width:14px;height:2px;background:#d9d0ae"></div>
<div class="hl" style="left:456px;top:1007px;width:1021px;background:#e0e0e0"></div>
<div class="a" style="left:456px;top:1008px;width:1021px;height:22px;background:#f2f2f2"></div>
<div class="vl" style="left:1477px;top:58px;height:973px;background:#d0d0d0"></div>
<div class="hl" style="left:1px;top:1030px;width:1498px;background:#c9c9c9"></div>
<div class="hl" style="left:1px;top:1052px;width:1498px;background:#c9c9c9"></div>
<svg style="left:11px;top:37px" width="14" height="11"><path d="M0 0H5L6.5 2H14V11H0Z" fill="#aab2b9"/><circle cx="5" cy="6.5" r="2" fill="#fff"/></svg>
<div class="ui" style="left:29px;top:37px">net</div>
<svg style="left:828px;top:35px" width="16" height="15"><path d="M0 6.5L6.5 0.7L9.6 3.6L3 9.4Z" fill="#59a869"/><path d="M6 5.5L13.8 14" stroke="#59a869" stroke-width="3.2"/></svg>
<div class="a" style="left:855px;top:32px;width:79px;height:22px;background:#e6e6e6;border:1px solid #b4b4b4"></div>
<svg style="left:861px;top:35px" width="14" height="14"><path d="M3 1H13V11" stroke="#9aa7b0" stroke-width="1.2" fill="none"/><rect x="0.5" y="3.5" width="11" height="10" fill="#f2f2f2" stroke="#9aa7b0"/><rect x="2" y="6" width="8" height="6" fill="#78c0e0"/></svg>
<div class="ui" style="left:880px;top:37px;letter-spacing:-0.557px;">Server</div>
<svg style="left:920px;top:41px" width="9" height="5"><path d="M0.5 0.5L4.5 4.5L8.5 0.5" fill="none" stroke="#6e6e6e"/></svg>
<svg style="left:948px;top:37px" width="10" height="12"><path d="M0 0L10 6L0 12Z" fill="#59a869"/></svg>
<svg style="left:972px;top:36px" width="13" height="14"><g transform="translate(0 0) scale(1)"><path d="M3.5 0.5L5 2.5M9.5 0.5L8 2.5" stroke="#59a869" stroke-width="1.4"/><ellipse cx="6.5" cy="4" rx="3" ry="2" fill="#59a869"/><path d="M1.5 6.5Q6.5 3.5 11.5 6.5V10Q11.5 13.5 6.5 13.5Q1.5 13.5 1.5 10Z" fill="#59a869"/><path d="M0 7H2M11 7H13M0 10.5H2M11 10.5H13" stroke="#59a869" stroke-width="1.4"/><path d="M4.5 8H8.5M4.5 10.5H8.5" stroke="#f2f2f2" stroke-width="1.1"/></g></svg>
<svg style="left:997px;top:37px" width="16" height="15"><path d="M0.5 1.5L5.5 0L10.5 1.5V6C10.5 9 8 11 5.5 12C3 11 0.5 9 0.5 6Z" fill="#6e6e6e"/><path d="M5.5 0L10.5 1.5V6C10.5 7 10.2 8 9.8 8.5L5.5 6Z" fill="#505050"/><path d="M6.5 5.5L15 10L6.5 14.5Z" fill="#59a869" stroke="#f2f2f2" stroke-width="1"/></svg>
<svg style="left:1023px;top:37px" width="16" height="16"><circle cx="6" cy="6" r="5.3" fill="none" stroke="#c8c8c8" stroke-width="1.3"/><path d="M6 3V6L4.5 7.5" stroke="#c8c8c8" stroke-width="1.1" fill="none"/><path d="M8 7L15.5 11.5L12.5 12L14.5 15L13 15.8L11 12.8L9 14.5Z" fill="#c8c8c8" stroke="#f2f2f2" stroke-width="0.6"/></svg>
<svg style="left:1050px;top:36px" width="16" height="16"><g transform="translate(0 0) scale(1)"><path d="M3.5 0.5L5 2.5M9.5 0.5L8 2.5" stroke="#59a869" stroke-width="1.4"/><ellipse cx="6.5" cy="4" rx="3" ry="2" fill="#59a869"/><path d="M1.5 6.5Q6.5 3.5 11.5 6.5V10Q11.5 13.5 6.5 13.5Q1.5 13.5 1.5 10Z" fill="#59a869"/><path d="M0 7H2M11 7H13M0 10.5H2M11 10.5H13" stroke="#59a869" stroke-width="1.4"/><path d="M4.5 8H8.5M4.5 10.5H8.5" stroke="#f2f2f2" stroke-width="1.1"/></g><rect x="5.5" y="7.5" width="9" height="8" fill="#3c3c3c" stroke="#f2f2f2"/><path d="M7 9.5H10M8.5 9.5V13M13.5 9.5H11.3V12.5H13.5M7 14H10.5" stroke="#fff" stroke-width="0.9" fill="none"/></svg>
<svg style="left:1075px;top:36px" width="15" height="16"><path d="M1.5 4Q1 2 2.5 0.5M4.5 4Q4 2 5.5 0.5M7.5 4Q7 2 8.5 0.5" stroke="#3c3c3c" stroke-width="1" fill="none"/><path d="M10.5 1H13V13.5H10.5" stroke="#6e6e6e" stroke-width="2.2" fill="none"/><g transform="translate(0.5 6) scale(0.62)"><path d="M3.5 0.5L5 2.5M9.5 0.5L8 2.5" stroke="#59a869" stroke-width="1.4"/><ellipse cx="6.5" cy="4" rx="3" ry="2" fill="#59a869"/><path d="M1.5 6.5Q6.5 3.5 11.5 6.5V10Q11.5 13.5 6.5 13.5Q1.5 13.5 1.5 10Z" fill="#59a869"/><path d="M0 7H2M11 7H13M0 10.5H2M11 10.5H13" stroke="#59a869" stroke-width="1.4"/><path d="M4.5 8H8.5M4.5 10.5H8.5" stroke="#f2f2f2" stroke-width="1.1"/></g></svg>
<div class="a" style="left:1103px;top:38px;width:11px;height:11px;background:#c8c8c8"></div>
<div class="vl" style="left:1125px;top:33px;height:20px;background:#d0d0d0"></div>
<div class="ui" style="left:1134px;top:37px;letter-spacing:-0.879px;">SVN:</div>
<svg style="left:1170px;top:36px" width="14" height="14"><path d="M13 1L2.5 11.5M2 5V12H9" stroke="#389fd6" stroke-width="2" fill="none"/></svg>
<svg style="left:1196px;top:37px" width="15" height="12"><path d="M1 6L5.5 10.5L14 1.5" stroke="#59a869" stroke-width="2.2" fill="none"/></svg>
<svg style="left:1222px;top:36px" width="14" height="14"><circle cx="7" cy="7" r="6" fill="none" stroke="#c4c4c4" stroke-width="1.5"/><path d="M7 3.5V7.5L9.5 9" stroke="#c4c4c4" stroke-width="1.3" fill="none"/></svg>
<svg style="left:1249px;top:36px" width="14" height="14"><path d="M4 1.5L1 4.5L4 7.5" stroke="#6e6e6e" stroke-width="1.6" fill="none"/><path d="M1.5 4.5H8A4.5 4.5 0 0 1 8 13.5H4" stroke="#6e6e6e" stroke-width="1.6" fill="none"/></svg>
<div class="vl" style="left:1271px;top:33px;height:20px;background:#d0d0d0"></div>
<div class="a" style="left:1276px;top:32px;width:109px;height:22px;background:#e6e6e6;border:1px solid #b4b4b4"></div>
<svg style="left:1283px;top:35px" width="14" height="16"><path d="M0.5 0.5H7L10.5 4V14.5H0.5Z" fill="#9aa7b0"/><path d="M7 0.5V4H10.5" fill="#c8ced3"/><circle cx="10" cy="11" r="4.2" fill="#e4e4e4"/><path d="M8 9.3A2 2 0 1 1 10.2 11.2V12.3M10.2 13.5V14.7" stroke="#389fd6" stroke-width="1.4" fill="none"/></svg>
<div class="ui" style="left:1301px;top:37px;letter-spacing:-0.140px;">Default task</div>
<svg style="left:1370px;top:41px" width="9" height="5"><path d="M0.5 0.5L4.5 4.5L8.5 0.5" fill="none" stroke="#6e6e6e"/></svg>
<svg style="left:1393px;top:36px" width="13" height="13"><rect width="13" height="13" fill="#6e6e6e"/><path d="M4 3.5L7.5 6.5L4 9.5" stroke="#f2f2f2" stroke-width="1.5" fill="none"/></svg>
<svg style="left:1418px;top:36px" width="15" height="14"><path d="M0 0H5L6.5 2H13V7H8V12H0Z" fill="#6e6e6e"/><rect x="9" y="8" width="2.5" height="2.5" fill="#389fd6"/><rect x="12.5" y="8" width="2.5" height="2.5" fill="#389fd6"/><rect x="9" y="11.5" width="2.5" height="2.5" fill="#389fd6"/><rect x="12.5" y="11.5" width="2.5" height="2.5" fill="#389fd6"/></svg>
<div class="vl" style="left:1441px;top:33px;height:20px;background:#d0d0d0"></div>
<svg style="left:1451px;top:36px" width="15" height="13"><rect x="0.75" y="0.75" width="13.5" height="11.5" fill="none" stroke="#6e6e6e" stroke-width="1.5"/><path d="M1 3H14" stroke="#6e6e6e" stroke-width="1.5"/><path d="M5 5L10 7.5L5 10Z" fill="#59a869"/></svg>
<svg style="left:1477px;top:35px" width="15" height="15"><circle cx="6" cy="6" r="4.8" fill="none" stroke="#6e6e6e" stroke-width="1.8"/><path d="M9.5 9.5L14 14" stroke="#6e6e6e" stroke-width="2.2"/></svg>
<svg style="left:32px;top:64px" width="15" height="13"><path d="M3 0H6.5L8 1.5H14V9H3Z" fill="#c0c6cb"/><path d="M0 3H4.5L6 4.5H12V13H0Z" fill="#9aa7b0" stroke="#e4e6ea" stroke-width="0.8"/></svg>
<div class="ui" style="left:51px;top:65px;letter-spacing:-0.525px;">Packages</div>
<svg style="left:109px;top:70px" width="8" height="5"><path d="M0 0H8L4 5Z" fill="#6e6e6e"/></svg>
<svg style="left:350px;top:64px" width="14" height="14"><circle cx="7" cy="7" r="6" fill="none" stroke="#6e6e6e" stroke-width="1.5"/><path d="M7 1V4.8M7 9.2V13M1 7H4.8M9.2 7H13" stroke="#6e6e6e" stroke-width="1.6"/></svg>
<svg style="left:377px;top:65px" width="12" height="12"><path d="M0 6H12" stroke="#6e6e6e" stroke-width="1.3"/><path d="M3 0.5H9L6 3.5Z" fill="#6e6e6e"/><path d="M3 11.5H9L6 8.5Z" fill="#6e6e6e"/></svg>
<div class="vl" style="left:399px;top:61px;height:20px;background:#c9ccd2"></div>
<svg style="left:409px;top:64px" width="14" height="14"><circle cx="6.5" cy="7" r="4.6" fill="#6e6e6e"/><path d="M6.5 0.5V3M6.5 11V13.5M0.9 3.75L3.1 5M9.9 9L12.1 10.25M0.9 10.25L3.1 9M9.9 5L12.1 3.75" stroke="#6e6e6e" stroke-width="3"/><circle cx="6.5" cy="7" r="2.1" fill="#e4e6ea"/></svg>
<div class="a" style="left:436px;top:70px;width:12px;height:2px;background:#6e6e6e"></div>
<div class="a" style="left:598px;top:58px;width:198px;height:26px;background:#f7f7f7"></div>
<div class="a" style="left:598px;top:82px;width:198px;height:3px;background:#9ca4b9"></div>
<svg style="left:464px;top:64px" width="14" height="14"><circle cx="7" cy="7" r="7" fill="#84c8e0"/><path d="M9.1 5.6A2.4 2.6 0 1 0 9.1 8.4" fill="none" stroke="#23424e" stroke-width="1.15"/></svg>
<div class="ui" style="left:483px;top:65px;letter-spacing:-0.376px;">ParameterSet.java</div>
<svg style="left:583px;top:67px" width="8" height="8"><path d="M0 0L8 8M8 0L0 8" stroke="#b4b4b4" stroke-width="1"/></svg>
<svg style="left:607px;top:64px" width="14" height="14"><circle cx="7" cy="7" r="7" fill="#84c8e0"/><path d="M9.1 5.6A2.4 2.6 0 1 0 9.1 8.4" fill="none" stroke="#23424e" stroke-width="1.15"/></svg>
<div class="ui" style="left:625px;top:65px;letter-spacing:-0.282px;">ConverterRestfulService.java</div>
<svg style="left:780px;top:67px" width="8" height="8"><path d="M0 0L8 8M8 0L0 8" stroke="#b4b4b4" stroke-width="1"/></svg>
<div class="ui" style="left:529px;top:1013px;letter-spacing:-0.220px;color:#666">ConverterRestfulService</div>
<svg style="left:662px;top:1016px" width="5" height="8"><path d="M0.5 0.5L4 4L0.5 7.5" stroke="#a0a0a0" fill="none"/></svg>
<div class="ui" style="left:678px;top:1013px;letter-spacing:-0.224px;color:#666">process()</div>
<div class="ui" style="left:6px;top:114px;transform-origin:0 0;transform:rotate(-90deg);letter-spacing:-0.570px"><u>1</u>: Project</div>
<svg style="left:7px;top:120px" width="11" height="10"><path d="M0 0H4L5 1.5H11V10H0Z" fill="#6e6e6e"/></svg>
<div class="ui" style="left:6px;top:846px;transform-origin:0 0;transform:rotate(-90deg);letter-spacing:-0.421px"><u>7</u>: Structure</div>
<svg style="left:7px;top:851px" width="10" height="10"><rect x="5" y="0" width="4" height="4" fill="#6e6e6e"/><rect x="0" y="5" width="4" height="4" fill="#6e6e6e"/><rect x="5" y="5" width="4" height="4" fill="#6e6e6e"/></svg>
<div class="ui" style="left:6px;top:941px;transform-origin:0 0;transform:rotate(-90deg);letter-spacing:-0.809px"><u>2</u>: Favorites</div>
<svg style="left:5px;top:945px" width="14" height="14"><path d="M7 0.5L8.8 5H13.5L9.7 8L11.2 13L7 10L2.8 13L4.3 8L0.5 5H5.2Z" fill="#6e6e6e"/></svg>
<div class="ui" style="left:6px;top:994px;transform-origin:0 0;transform:rotate(-90deg);letter-spacing:-1.156px">Web</div>
<svg style="left:5px;top:998px" width="14" height="14"><circle cx="7" cy="7" r="6.5" fill="#6e6e6e"/><path d="M3 3Q6 4 5 7Q4 9 6 11M9 2Q8 5 11 6Q12 8 10 11" stroke="#f2f2f2" stroke-width="1.3" fill="none"/></svg>
<svg style="left:1483px;top:68px" width="12" height="13"><path d="M0.5 2A5.5 2 0 0 1 11.5 2V3.2A5.5 2 0 0 1 0.5 3.2Z" fill="#6e6e6e"/><path d="M0.5 5A5.5 2 0 0 0 11.5 5V6.8A5.5 2 0 0 1 0.5 6.8Z" fill="#6e6e6e"/><path d="M0.5 8.6A5.5 2 0 0 0 11.5 8.6V10.5A5.5 2 0 0 1 0.5 10.5Z" fill="#6e6e6e"/></svg>
<div class="ui" style="left:1494px;top:85px;transform-origin:0 0;transform:rotate(90deg);letter-spacing:-0.547px">Database</div>
<svg style="left:1483px;top:156px" width="13" height="12"><circle cx="5.8" cy="5.5" r="5.2" fill="#6e6e6e"/><path d="M1.5 2L8.5 8.8" stroke="#f2f2f2" stroke-width="1.2"/><path d="M5.5 8.5L7.8 10.8L12 6.2" stroke="#f2f2f2" stroke-width="3" fill="none"/><path d="M5.5 8.5L7.8 10.8L12 6.2" stroke="#6e6e6e" stroke-width="1.5" fill="none"/></svg>
<div class="ui" style="left:1494px;top:172px;transform-origin:0 0;transform:rotate(90deg);letter-spacing:-0.452px">Bean Validation</div>
<div class="a" style="left:1481px;top:272px;font:bold italic 15px 'Liberation Sans';color:#6e6e6e;line-height:16px">m</div>
<div class="ui" style="left:1494px;top:293px;transform-origin:0 0;transform:rotate(90deg);letter-spacing:-0.606px">Maven</div>
<svg style="left:35px;top:1038px" width="11" height="9"><path d="M0 1H2M0 4H2M0 7H2M3.5 1H10M3.5 4H10M3.5 7H10" stroke="#6e6e6e" stroke-width="1.6"/></svg>
<div class="ui" style="left:50px;top:1036px;letter-spacing:-0.613px;"><u>6</u>: TODO</div>
<svg style="left:119px;top:1036px" width="12" height="12"><path d="M1.5 0V11.5M1.5 6.5H8V2" stroke="#6e6e6e" stroke-width="1.8" fill="none"/><path d="M5 4.5L8 1L11 4.5Z" fill="#6e6e6e"/></svg>
<div class="ui" style="left:134px;top:1036px;letter-spacing:-0.150px;"><u>9</u>: Version Control</div>
<svg style="left:251px;top:1036px" width="13" height="13"><rect x="0.5" y="0.5" width="12" height="12" fill="#000" stroke="#c5367d"/><path d="M2.5 3L4.2 5.5L6 3M4.2 5.5V8M6.5 3H10.5M8.5 3V8M2.5 10H7" stroke="#fff" stroke-width="1.1" fill="none"/></svg>
<div class="ui" style="left:268px;top:1036px;letter-spacing:-0.564px;">YouTrack</div>
<svg style="left:336px;top:1036px" width="11" height="11"><rect width="11" height="11" fill="#6e6e6e"/><path d="M1.5 3H5M3.2 3V7M9.5 3H7V7H9.5M1.5 9H5.5" stroke="#f2f2f2" stroke-width="1" fill="none"/></svg>
<div class="ui" style="left:352px;top:1036px;letter-spacing:-0.589px;">TeamCity</div>
<svg style="left:420px;top:1037px" width="11" height="10"><rect width="11" height="10" fill="#6e6e6e"/><path d="M2 2L4.5 4.5L2 7M5 8H9" stroke="#f2f2f2" stroke-width="1" fill="none"/></svg>
<div class="ui" style="left:436px;top:1036px;letter-spacing:-0.232px;">Terminal</div>
<svg style="left:504px;top:1037px" width="12" height="12"><path d="M0 0H10V4H4V10H0Z" fill="#6e6e6e"/><rect x="4.5" y="4.5" width="7" height="6.5" fill="#f2f2f2" stroke="#6e6e6e"/><path d="M6 6.5H7.5M6 8.5H7.5M8.5 6.5H10M8.5 8.5H10" stroke="#6e6e6e" stroke-width="0.9"/></svg>
<div class="ui" style="left:520px;top:1036px;letter-spacing:-0.525px;">Java Enterprise</div>
<svg style="left:617px;top:1035px" width="14" height="14"><path d="M0 5.5L5.5 0.5L8.3 3.2L2.7 8.2Z" fill="#6e6e6e"/><path d="M5 4.5L12.5 12.5" stroke="#6e6e6e" stroke-width="2.8"/></svg>
<div class="ui" style="left:634px;top:1036px;letter-spacing:-0.338px;">Build</div>
<svg style="left:680px;top:1036px" width="13" height="13"><path d="M3.2 0.3H9.8L13 6.5L9.8 12.7H3.2L0 6.5Z" fill="#6e6e6e"/><path d="M4.8 3.5L9.5 6.5L4.8 9.5Z" fill="#f2f2f2"/></svg>
<div class="ui" style="left:697px;top:1036px;letter-spacing:-0.734px;"><u>8</u>: Services</div>
<svg style="left:1400px;top:1036px" width="13" height="13"><path d="M0.75 12.25V6.5A5.75 5.75 0 1 1 6.5 12.25Z" fill="none" stroke="#6e6e6e" stroke-width="1.5"/></svg>
<div class="ui" style="left:1417px;top:1036px;letter-spacing:-0.483px;">Event Log</div>
<svg style="left:7px;top:1057px" width="13" height="13"><rect x="3.5" y="0.5" width="9" height="9" fill="none" stroke="#6e6e6e"/><path d="M0.5 3.5V12.5H9.5" fill="none" stroke="#6e6e6e"/></svg>
<div class="ui" style="left:1121px;top:1057px;letter-spacing:-0.666px;">75:80</div>
<div class="ui" style="left:1161px;top:1057px;letter-spacing:-1.361px;">CRLF</div>
<div class="ui" style="left:1199px;top:1057px;letter-spacing:-0.600px;">UTF-8</div>
<div class="ui" style="left:1242px;top:1057px;letter-spacing:-0.516px;">4 spaces</div>
<svg style="left:1297px;top:1056px" width="12" height="13"><path d="M1.5 6V3.5A2.5 2.5 0 0 1 6.5 3.5" stroke="#3c3c3c" stroke-width="1.5" fill="none"/><rect x="4" y="6" width="8" height="7" fill="#3c3c3c"/></svg>
<svg style="left:1322px;top:1056px" width="12" height="13"><path d="M3 4L4 0.5H8L9 4Z" fill="#3c3c3c"/><path d="M0 4.5H12" stroke="#3c3c3c" stroke-width="1.5"/><path d="M3 6Q3 11 6 11Q9 11 9 6" fill="#bdbdbd" stroke="#3c3c3c"/><path d="M3 12.5H9" stroke="#3c3c3c" stroke-width="1.5"/></svg>
<svg style="left:1345px;top:1055px" width="15" height="15"><circle cx="4" cy="3" r="2.5" fill="#9aa7b0"/><path d="M0 10Q0 6 4 6Q8 6 8 10Z" fill="#389fd6"/><circle cx="10.5" cy="10" r="4" fill="#e05555"/></svg>
<svg style="left:1370px;top:1056px" width="12" height="12"><path d="M6 0V7M3 4.5L6 7.5L9 4.5" stroke="#c8c8c8" stroke-width="1.5" fill="none"/><path d="M0.5 8V11.5H11.5V8" stroke="#c8c8c8" stroke-width="1.3" fill="none"/></svg>
<svg style="left:1393px;top:1055px" width="14" height="15"><path d="M5 0.5L6 2L7.8 1.8L8 3.5L9.6 4.5L8.8 6L9.6 7.5L8 8.5L7.8 10.2L6 10L5 11.5L4 10L2.2 10.2L2 8.5L0.4 7.5L1.2 6L0.4 4.5L2 3.5L2.2 1.8L4 2Z" fill="#6e6e6e"/><circle cx="5" cy="6" r="1.6" fill="#f2f2f2"/><path d="M9 9A2 2 0 1 1 11.5 11V12.5M11.5 13.5V15" stroke="#6e6e6e" stroke-width="1.3" fill="none"/></svg>
<div class="a" style="left:1418px;top:1053px;width:17px;height:20px;background:#c4c4c4"></div>
<div class="ui" style="left:1420px;top:1057px;letter-spacing:-0.558px;">619 of 3105M</div>
</body></html>
